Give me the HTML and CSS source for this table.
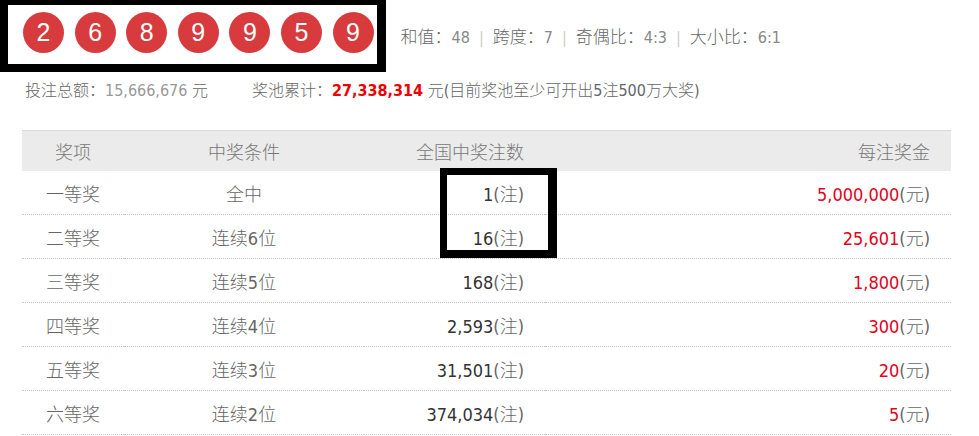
FILE: index.html
```html
<!DOCTYPE html>
<html lang="zh-CN">
<head>
<meta charset="utf-8">
<title>开奖结果</title>
<link rel="stylesheet" href="styles.css">
</head>
<body>
<div class="page">
  <div class="draw">
    <div class="balls">
      <span class="ball">2</span>
      <span class="ball">6</span>
      <span class="ball">8</span>
      <span class="ball">9</span>
      <span class="ball">9</span>
      <span class="ball">5</span>
      <span class="ball">9</span>
    </div>
    <div class="stats">
      和值：<span class="val">48</span><span class="sep">|</span>跨度：<span class="val">7</span><span class="sep">|</span>奇偶比：<span class="val">4:3</span><span class="sep">|</span>大小比：<span class="val">6:1</span>
    </div>
  </div>
  <div class="summary">
    <span class="sales">投注总额：<span class="muted">15,666,676</span> 元</span>
    <span class="pool">奖池累计：<b class="big">27,338,314</b> 元(目前奖池至少可开出5注500万大奖)</span>
  </div>
  <table class="prizes">
    <colgroup>
      <col class="c1"><col class="c2"><col class="c3"><col class="c4">
    </colgroup>
    <thead>
      <tr><th class="center">奖项</th><th class="center">中奖条件</th><th class="right">全国中奖注数</th><th class="right">每注奖金</th></tr>
    </thead>
    <tbody>
      <tr><td class="center">一等奖</td><td class="center">全中</td><td class="right"><span class="num">1</span>(注)</td><td class="right"><span class="money">5,000,000</span>(元)</td></tr>
      <tr><td class="center">二等奖</td><td class="center">连续6位</td><td class="right"><span class="num">16</span>(注)</td><td class="right"><span class="money">25,601</span>(元)</td></tr>
      <tr><td class="center">三等奖</td><td class="center">连续5位</td><td class="right"><span class="num">168</span>(注)</td><td class="right"><span class="money">1,800</span>(元)</td></tr>
      <tr><td class="center">四等奖</td><td class="center">连续4位</td><td class="right"><span class="num">2,593</span>(注)</td><td class="right"><span class="money">300</span>(元)</td></tr>
      <tr><td class="center">五等奖</td><td class="center">连续3位</td><td class="right"><span class="num">31,501</span>(注)</td><td class="right"><span class="money">20</span>(元)</td></tr>
      <tr><td class="center">六等奖</td><td class="center">连续2位</td><td class="right"><span class="num">374,034</span>(注)</td><td class="right"><span class="money">5</span>(元)</td></tr>
    </tbody>
  </table>
  <div class="mark mark-balls"></div>
  <div class="mark mark-count"></div>
</div>
</body>
</html>
```

FILE: styles.css
```css
html, body {
  margin: 0;
  padding: 0;
  background: #fff;
}
body {
  font-family: "DejaVu Sans Condensed", "Noto Sans CJK SC", sans-serif;
  font-weight: 300;
  color: #666;
}
.page {
  position: relative;
  width: 979px;
  height: 436px;
  overflow: hidden;
}
.draw {
  display: flex;
  align-items: center;
  height: 64px;
  padding-left: 23px;
}
.balls {
  display: flex;
  gap: 10.6px;
  padding-top: 1px;
}
.ball {
  width: 41px;
  height: 41px;
  border-radius: 50%;
  background: #d73b3e;
  color: #fff;
  font-family: "Liberation Sans", Arial, sans-serif;
  font-weight: normal;
  font-size: 25px;
  line-height: 41px;
  text-align: center;
}
.stats {
  margin-left: 27px;
  padding-top: 6px;
  font-size: 17px;
  color: #666;
}
.stats .val {
  font-size: 16px;
  color: #888;
}
.stats .sep {
  font-size: 16px;
  color: #ccc;
  margin: 0 9px;
}
.summary {
  display: flex;
  padding: 16px 0 0 25px;
  font-size: 16px;
  line-height: 22px;
  color: #666;
}
.summary .muted {
  color: #999;
}
.summary .pool {
  margin-left: 44px;
}
.summary .big {
  color: #e00;
  font-weight: bold;
}
.prizes {
  margin: 28px 0 0 22px;
  width: 929px;
  border-collapse: collapse;
  table-layout: fixed;
  font-size: 18px;
}
.c1 { width: 102px; }
.c2 { width: 240px; }
.c3 { width: 181px; }
.prizes thead tr {
  background: #ebebeb;
  border-top: 1px solid #d8d8d8;
}
.prizes th {
  height: 40px;
  padding: 0;
  font-weight: 300;
  color: #777;
}
.prizes td {
  height: 43px;
  padding: 0;
  border-bottom: 1px dotted #c8c8c8;
  color: #666;
}
.prizes .center {
  text-align: center;
}
.prizes .right {
  text-align: right;
  padding-right: 21px;
}
.prizes .num {
  color: #333;
}
.prizes .money {
  color: #e4001b;
}
.mark {
  position: absolute;
  box-sizing: border-box;
  border: 0 solid #000;
}
.mark-balls {
  left: 0;
  top: 0;
  width: 386px;
  height: 72px;
  border-width: 5px 9px 8px 8px;
}
.mark-count {
  left: 440px;
  top: 168px;
  width: 117px;
  height: 90px;
  border-width: 7px 9px 8px 7px;
}
```
